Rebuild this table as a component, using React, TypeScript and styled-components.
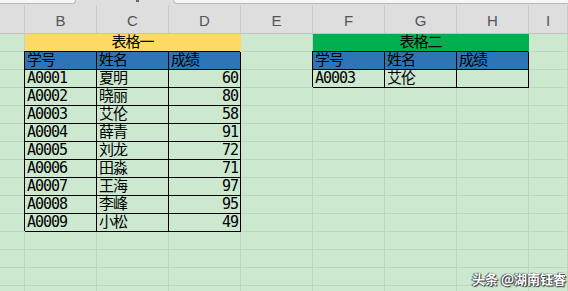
import styled, { createGlobalStyle } from 'styled-components';

const GlobalStyle = createGlobalStyle`
  html, body {
    margin: 0;
    padding: 0;
    background: #cce8cf;
    overflow: hidden;
  }
`;

type Kind = 'plain' | 'title1' | 'title2' | 'head' | 'data';

interface CellSpec {
  text?: string;
  span?: number;
  kind?: Kind;
  right?: boolean;
}

const GRID = '#bcd6c0';

const FILLS: Record<Kind, string> = {
  plain: 'transparent',
  title1: '#ffd966',
  title2: '#00b050',
  head: '#2e75b6',
  data: 'transparent',
};

const COLUMNS = ['', 'B', 'C', 'D', 'E', 'F', 'G', 'H', 'I'];

const scores: [string, string, string][] = [
  ['A0001', '夏明', '60'],
  ['A0002', '晓丽', '80'],
  ['A0003', '艾伦', '58'],
  ['A0004', '薛青', '91'],
  ['A0005', '刘龙', '72'],
  ['A0006', '田淼', '71'],
  ['A0007', '王海', '97'],
  ['A0008', '李峰', '95'],
  ['A0009', '小松', '49'],
];

const blank = (n: number): CellSpec[] => Array.from({ length: n }, () => ({}));

const head = (): CellSpec[] => [
  { text: '学号', kind: 'head' },
  { text: '姓名', kind: 'head' },
  { text: '成绩', kind: 'head' },
];

const rows: CellSpec[][] = [
  [{}, { text: '表格一', span: 3, kind: 'title1' }, {}, { text: '表格二', span: 3, kind: 'title2' }, {}],
  [{}, ...head(), {}, ...head(), {}],
  ...scores.map(([id, name, score], i) => [
    {},
    { text: id, kind: 'data' as Kind },
    { text: name, kind: 'data' as Kind },
    { text: score, kind: 'data' as Kind, right: true },
    {},
    ...(i === 0
      ? [
          { text: 'A0003', kind: 'data' as Kind },
          { text: '艾伦', kind: 'data' as Kind },
          { kind: 'data' as Kind },
        ]
      : blank(3)),
    {},
  ]),
  blank(9),
  blank(9),
  blank(9),
  blank(9),
];

const boxed = (k: Kind) => k === 'head' || k === 'data';

const Page = styled.div`
  position: relative;
  width: 568px;
  height: 291px;
  overflow: hidden;
  background: #cce8cf;
`;

const FormulaStrip = styled.div`
  display: flex;
  align-items: flex-start;
  height: 5px;
  background: #dedede;
`;

const NameBox = styled.div`
  width: 76px;
  height: 4px;
  background: #f6f6f6;
  border-right: 1px solid #b9b9b9;
  border-bottom: 1px solid #b9b9b9;
  border-bottom-right-radius: 4px;
  box-sizing: border-box;
`;

const Dot = styled.div`
  width: 3px;
  height: 2px;
  margin: 0 0 0 60px;
  background: #666;
`;

const FormulaBox = styled.div`
  flex: 1;
  height: 4px;
  margin-left: 34px;
  background: #f6f6f6;
  border-left: 1px solid #b9b9b9;
  border-bottom: 1px solid #b9b9b9;
  border-bottom-left-radius: 4px;
  box-sizing: border-box;
`;

const Sheet = styled.div`
  display: grid;
  grid-template-columns: 25px repeat(7, 72px) 1fr;
  grid-template-rows: 29px;
  grid-auto-rows: 18px;
`;

const ColHead = styled.div`
  display: flex;
  align-items: center;
  justify-content: center;
  padding-top: 2px;
  background: #dedede;
  border-right: 1px solid #c9c9c9;
  border-bottom: 1px solid #c2c2c2;
  box-sizing: border-box;
  font-family: "Liberation Sans", Arial, sans-serif;
  font-size: 15px;
  color: #555;
`;

const Cell = styled.div<{ $kind: Kind; $span: number; $right: boolean }>`
  grid-column: span ${p => p.$span};
  display: flex;
  align-items: flex-end;
  justify-content: ${p => (p.$kind.startsWith('title') ? 'center' : p.$right ? 'flex-end' : 'flex-start')};
  padding: 0 2px;
  box-sizing: border-box;
  overflow: hidden;
  white-space: nowrap;
  background: ${p => FILLS[p.$kind]};
  border-right: 1px solid ${p => (boxed(p.$kind) ? '#000' : p.$kind === 'plain' ? GRID : FILLS[p.$kind])};
  border-bottom: 1px solid ${p => (boxed(p.$kind) ? '#000' : p.$kind === 'plain' ? GRID : FILLS[p.$kind])};
  box-shadow: ${p => (boxed(p.$kind) ? '-1px -1px 0 #000' : 'none')};
  font-family: "DejaVu Sans Mono", "Noto Sans CJK SC", monospace;
  font-size: 15px;
  letter-spacing: -1px;
  line-height: 17px;
  color: #000;
`;

const Watermark = styled.div`
  position: absolute;
  right: 2px;
  bottom: 4px;
  font-family: "Noto Sans CJK SC", sans-serif;
  font-size: 13px;
  font-weight: 700;
  line-height: 16px;
  color: #fff;
  text-shadow: 0 0 1px #222, 1px 1px 1px #333, -1px 0 1px #444;
`;

export default function App() {
  return (
    <Page>
      <GlobalStyle />
      <FormulaStrip>
        <NameBox />
        <Dot />
        <FormulaBox />
      </FormulaStrip>
      <Sheet>
        {COLUMNS.map((c, i) => (
          <ColHead key={`h${i}`}>{c}</ColHead>
        ))}
        {rows.map((row, r) =>
          row.map((cell, c) => (
            <Cell
              key={`${r}-${c}`}
              $kind={cell.kind ?? 'plain'}
              $span={cell.span ?? 1}
              $right={!!cell.right}
            >
              {cell.text}
            </Cell>
          )),
        )}
      </Sheet>
      <Watermark>头条 @湖南钰睿</Watermark>
    </Page>
  );
}
